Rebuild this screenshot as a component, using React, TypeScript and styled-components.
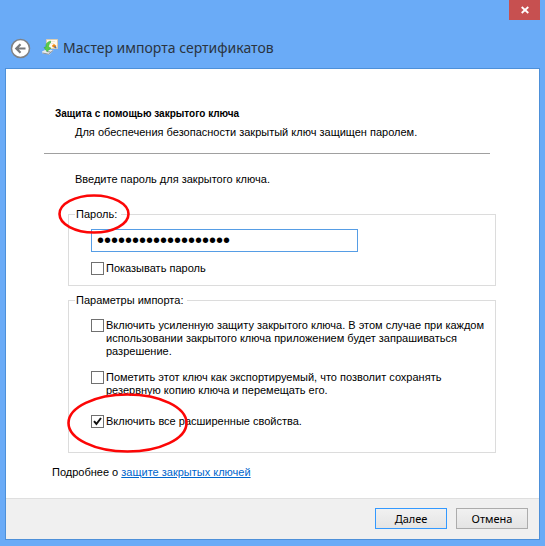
import React, { useState } from "react";
import styled, { createGlobalStyle } from "styled-components";

const GlobalStyle = createGlobalStyle`
  *, *::before, *::after { box-sizing: border-box; }
  body {
    margin: 0;
    background: #6aabf7;
    color: #000;
    font: 11px/13px "Liberation Sans", Arial, sans-serif;
  }
`;

const Window = styled.div`
  display: flex;
  flex-direction: column;
  min-height: 100vh;
  padding: 0 5px 6px;
`;

const TopBar = styled.div`
  display: flex;
  justify-content: flex-end;
  height: 20px;
`;

const CloseButton = styled.button`
  display: grid;
  place-items: center;
  width: 31px;
  height: 20px;
  padding: 0;
  border: 0;
  background: #c75050;
`;

const TitleRow = styled.header`
  display: flex;
  align-items: center;
  height: 48px;
  padding: 8px 5px 0;
`;

const BackButton = styled.button`
  display: flex;
  padding: 0;
  border: 0;
  background: none;
`;

const TitleIcon = styled.svg`
  margin: 0 5px 2px 11px;
`;

const Title = styled.h1`
  margin: 0;
  color: #2b3440;
  font: 400 14px/20px "Noto Sans", "Open Sans", sans-serif;
`;

const Panel = styled.main`
  display: flex;
  flex: 1;
  flex-direction: column;
  border: 1px solid #4d90d9;
  background: #fff;
`;

const Page = styled.div`
  flex: 1;
  padding: 38px 43px 19px 38px;
`;

const Heading = styled.div`
  margin-right: 6px;
  padding: 0 0 14px 11px;
  border-bottom: 1px solid #a0a0a0;
`;

const HeadingTitle = styled.h2`
  margin: 0 0 6px;
  font-size: 10px;
  font-weight: 700;
  line-height: 13px;
`;

const Paragraph = styled.p`
  margin: 0;
  padding-left: 20px;
`;

const Fields = styled.div`
  padding: 19px 0 0 24px;
`;

const Intro = styled.p`
  margin: 0 0 22px 7px;
`;

const Group = styled.fieldset`
  position: relative;
  display: flex;
  flex-direction: column;
  min-width: 0;
  margin: 0 0 8px;
  padding: 8px 5px 10px 22px;
  border: 1px solid #dcdcdc;
`;

const OptionsGroup = styled(Group)`
  margin-bottom: 13px;
  padding-top: 12px;
  padding-bottom: 24px;
`;

const Legend = styled.legend`
  margin-left: -16px;
  padding: 0 4px 0 1px;
`;

const PasswordInput = styled.input`
  width: 267px;
  max-width: 100%;
  height: 23px;
  margin-bottom: 10px;
  padding: 0 5px;
  border: 1px solid #569de5;
  outline: 0;
  background: #fff;
  color: #000;
  font: 20px/20px "Liberation Sans", Arial, sans-serif;
`;

const CheckLabel = styled.label`
  display: flex;
  align-items: flex-start;
  gap: 2px;

  & + & { margin-top: 13px; }
  & + &:last-of-type { margin-top: 18px; }
`;

const CheckBox = styled.input`
  flex: none;
  width: 13px;
  height: 13px;
  margin: 0;
  appearance: none;
  border: 1px solid #707070;
  background: #fff;

  &:checked {
    background: #fff
      url("data:image/svg+xml,%3Csvg xmlns='http://www.w3.org/2000/svg' viewBox='0 0 11 11'%3E%3Cpath d='M2 5.2 4.4 8 9 2' fill='none' stroke='%23111' stroke-width='2'/%3E%3C/svg%3E");
  }
`;

const More = styled.p`
  margin: 0 0 0 -16px;
`;

const Link = styled.a`
  color: #0066cc;
  text-decoration: underline;
`;

const Footer = styled.footer`
  display: flex;
  justify-content: flex-end;
  gap: 9px;
  padding: 9px 11px 10px;
  border-top: 1px solid #dfdfdf;
  background: #f0f0f0;
`;

const Button = styled.button<{ $primary?: boolean }>`
  width: 72px;
  height: 21px;
  padding: 0;
  border: 1px solid ${(p) => (p.$primary ? "#3399ff" : "#acacac")};
  background: linear-gradient(#f1f1f1, #e4e4e4);
  color: #000;
  font: 11px/16px "Noto Sans", "Open Sans", sans-serif;
`;

const Mark = styled.svg<{ $left: number; $top: number }>`
  position: absolute;
  left: ${(p) => p.$left}px;
  top: ${(p) => p.$top}px;
  pointer-events: none;
`;

type MarkProps = { width: number; height: number; left: number; top: number };

function Ring({ width, height, left, top }: MarkProps) {
  return (
    <Mark $left={left} $top={top} width={width} height={height} aria-hidden="true">
      <ellipse
        cx={width / 2}
        cy={height / 2}
        rx={width / 2 - 1.5}
        ry={height / 2 - 1.5}
        fill="none"
        stroke="#fc0606"
        strokeWidth="2.6"
      />
    </Mark>
  );
}

function CertificateIcon() {
  return (
    <TitleIcon width="16" height="16" viewBox="0 0 16 16" aria-hidden="true">
      <path d="M4.5.5h11v9h-11z" fill="#fdf9f0" stroke="#dccdb0" />
      <path d="M8 2.5h5M9 4.500h3" stroke="#eee6d6" />
      <path d="m0 12.500 4-2 7.500.5-4 4.500-7-1z" fill="#e6eaec" />
      <path d="m.5 14 6 1.200 4.500-3.700M4.500 12.500l4 .5" fill="none" stroke="#8c949b" />
      <path d="m10 6.500 2-1.500 2.500 2-1.500 2-2.500-1z" fill="#f08a12" />
      <path d="m12.500 7.500 1.800 1.500" stroke="#3b6db4" strokeWidth="1.200" />
      <path d="M8.500 2C5 3 3.500 5 4 8L2 8.500l3 4L9 9 6.800 8.300C6.500 6.500 7 5 8.500 4z" fill="#5bcb4a" stroke="#2da437" strokeWidth=".5" />
    </TitleIcon>
  );
}

export default function App() {
  const [password, setPassword] = useState("certificatepassword");

  return (
    <>
      <GlobalStyle />
      <Window>
        <TopBar>
          <CloseButton type="button" aria-label="Закрыть">
            <svg width="8" height="8" viewBox="0 0 8 8" aria-hidden="true">
              <path d="m.7 1 6.600 6M7.300 1 .7 7" stroke="#fff" strokeWidth="1.8" />
            </svg>
          </CloseButton>
        </TopBar>
        <TitleRow>
          <BackButton type="button" aria-label="Назад">
            <svg width="21" height="21" viewBox="0 0 21 21" aria-hidden="true">
              <circle cx="10.5" cy="10.500" r="9" fill="#fff" stroke="#808285" strokeWidth="1.500" />
              <path d="M15.500 10.500H6.500M10.500 6.300l-4.200 4.200 4.200 4.200" fill="none" stroke="#77797c" strokeWidth="2.200" />
            </svg>
          </BackButton>
          <CertificateIcon />
          <Title>Мастер импорта сертификатов</Title>
        </TitleRow>
        <Panel>
          <Page>
            <Heading>
              <HeadingTitle>Защита с помощью закрытого ключа</HeadingTitle>
              <Paragraph>Для обеспечения безопасности закрытый ключ защищен паролем.</Paragraph>
            </Heading>
            <Fields>
              <Intro>Введите пароль для закрытого ключа.</Intro>
              <Group>
                <Legend>
                  <label htmlFor="password">Пароль:</label>
                </Legend>
                <PasswordInput
                  id="password"
                  type="password"
                  value={password}
                  onChange={(e) => setPassword(e.target.value)}
                />
                <CheckLabel>
                  <CheckBox type="checkbox" />
                  <span>Показывать пароль</span>
                </CheckLabel>
                <Ring left={-11} top={-27} width={72} height={40} />
              </Group>
              <OptionsGroup>
                <Legend>Параметры импорта:</Legend>
                <CheckLabel>
                  <CheckBox type="checkbox" />
                  <span>
                    Включить усиленную защиту закрытого ключа. В этом случае при каждом
                    использовании закрытого ключа приложением будет запрашиваться разрешение.
                  </span>
                </CheckLabel>
                <CheckLabel>
                  <CheckBox type="checkbox" />
                  <span>
                    Пометить этот ключ как экспортируемый, что позволит сохранять
                    резервную копию ключа и перемещать его.
                  </span>
                </CheckLabel>
                <CheckLabel>
                  <CheckBox type="checkbox" defaultChecked />
                  <span>Включить все расширенные свойства.</span>
                </CheckLabel>
                <Ring left={-2} top={86} width={121} height={60} />
              </OptionsGroup>
              <More>
                Подробнее о <Link href="#private-keys">защите закрытых ключей</Link>
              </More>
            </Fields>
          </Page>
          <Footer>
            <Button type="button" $primary>Далее</Button>
            <Button type="button">Отмена</Button>
          </Footer>
        </Panel>
      </Window>
    </>
  );
}
